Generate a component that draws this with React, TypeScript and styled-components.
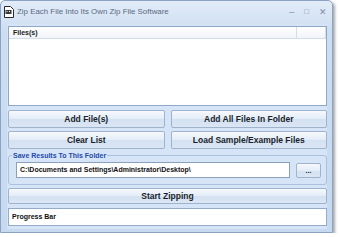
import React from "react";
import styled, { createGlobalStyle } from "styled-components";

const GlobalStyle = createGlobalStyle`
  html, body {
    margin: 0;
    padding: 0;
    background: #ffffff;
  }
  body {
    font-family: "Liberation Sans", Arial, sans-serif;
  }
`;

const Window = styled.div`
  width: 333px;
  height: 233px;
  box-sizing: border-box;
  border: 1px solid #8aa3c2;
  border-radius: 5px 5px 0 0;
  background: linear-gradient(#e2ecf8, #cddef2 30px, #c6d9ef);
  box-shadow: 2px 2px 3px rgba(0, 0, 0, 0.35);
  display: flex;
  flex-direction: column;
`;

const TitleBar = styled.div`
  height: 21px;
  display: flex;
  align-items: center;
  padding: 0 5px 0 2px;
  flex-shrink: 0;
`;

const Title = styled.span`
  flex: 1;
  margin-left: 3px;
  font-size: 7.9px;
  color: #5a6a80;
  white-space: nowrap;
`;

const Controls = styled.div`
  display: flex;
  gap: 10px;
  align-items: center;
  color: #7d8ea5;
  font-size: 9px;
`;

const Body = styled.div`
  flex: 1;
  margin: 2px 5px 4px 6px;
  padding: 2px 0 3px 1px;
  background: #d5e4f6;
  display: flex;
  flex-direction: column;
`;

const ListBox = styled.div`
  height: 80px;
  background: #ffffff;
  border: 1px solid #8fa8c8;
  box-sizing: border-box;
`;

const ListHeader = styled.div`
  height: 11px;
  display: flex;
  background: linear-gradient(#ffffff, #f1f4f9);
  border-bottom: 1px solid #d5dde8;
`;

const HeaderCell = styled.div<{ $grow?: boolean }>`
  ${(p) => (p.$grow ? "flex: 1;" : "width: 24px;")}
  border-right: 1px solid #d5dde8;
  font-size: 7px;
  font-weight: bold;
  color: #1b1b1b;
  line-height: 11px;
  padding-left: 4px;
`;

const ButtonGrid = styled.div`
  display: grid;
  grid-template-columns: 1fr 1fr;
  column-gap: 6px;
  row-gap: 3px;
  margin-top: 4px;
`;

const Button = styled.button<{ $h?: number }>`
  height: ${(p) => p.$h ?? 18}px;
  box-sizing: border-box;
  border: 1px solid #9fb3cd;
  border-radius: 2px;
  background: linear-gradient(#f6f9fd, #e3ecf7 50%, #d3e1f1 51%, #dbe6f4);
  font-family: "Liberation Sans", Arial, sans-serif;
  font-size: 8.5px;
  font-weight: bold;
  color: #1a1f2b;
  padding: 0;
  cursor: default;
`;

const Group = styled.fieldset`
  margin: 3px 0 0 0;
  padding: 3px 5px 6px 7px;
  border: 1px solid #aac0dc;
  border-radius: 3px;
  display: flex;
  gap: 6px;
  align-items: center;
`;

const Legend = styled.legend`
  font-size: 7px;
  font-weight: bold;
  color: #1f4aa8;
  padding: 0 1px;
  margin-left: -4px;
`;

const PathInput = styled.div`
  flex: 1;
  height: 16px;
  box-sizing: border-box;
  background: #ffffff;
  border: 1px solid #8aa0bd;
  font-size: 7px;
  font-weight: bold;
  color: #111;
  line-height: 14px;
  padding-left: 3px;
  white-space: nowrap;
  overflow: hidden;
`;

const SmallButton = styled(Button)`
  width: 25px;
  font-size: 7px;
`;

const StartButton = styled(Button)`
  margin-top: 3px;
  width: 100%;
`;

const Progress = styled.div`
  margin-top: 4px;
  height: 18px;
  box-sizing: border-box;
  background: #ffffff;
  border: 1px solid #94abc9;
  font-size: 7px;
  font-weight: bold;
  color: #111;
  line-height: 16px;
  padding-left: 3px;
`;

const AppIcon = () => (
  <svg width="11" height="12" viewBox="0 0 11 12">
    <path d="M1.5 0.5h6l3 3v8h-9z" fill="#ffffff" stroke="#2a2a2a" />
    <rect x="2.5" y="4" width="6" height="4" fill="#3b3b3b" />
    <rect x="3.5" y="5" width="1" height="1" fill="#fff" />
    <rect x="6" y="5" width="1" height="1" fill="#fff" />
  </svg>
);

export default function App() {
  return (
    <>
      <GlobalStyle />
      <Window>
        <TitleBar>
          <AppIcon />
          <Title>Zip Each File Into Its Own Zip File Software</Title>
          <Controls>
            <span>–</span>
            <span style={{ fontSize: 8 }}>□</span>
            <span>✕</span>
          </Controls>
        </TitleBar>
        <Body>
          <ListBox>
            <ListHeader>
              <HeaderCell $grow>Files(s)</HeaderCell>
              <HeaderCell />
            </ListHeader>
          </ListBox>
          <ButtonGrid>
            <Button>Add File(s)</Button>
            <Button>Add All Files In Folder</Button>
            <Button>Clear List</Button>
            <Button>Load Sample/Example Files</Button>
          </ButtonGrid>
          <Group>
            <Legend>Save Results To This Folder</Legend>
            <PathInput>C:\Documents and Settings\Administrator\Desktop\</PathInput>
            <SmallButton $h={15}>...</SmallButton>
          </Group>
          <StartButton $h={16}>Start Zipping</StartButton>
          <Progress>Progress Bar</Progress>
        </Body>
      </Window>
    </>
  );
}
